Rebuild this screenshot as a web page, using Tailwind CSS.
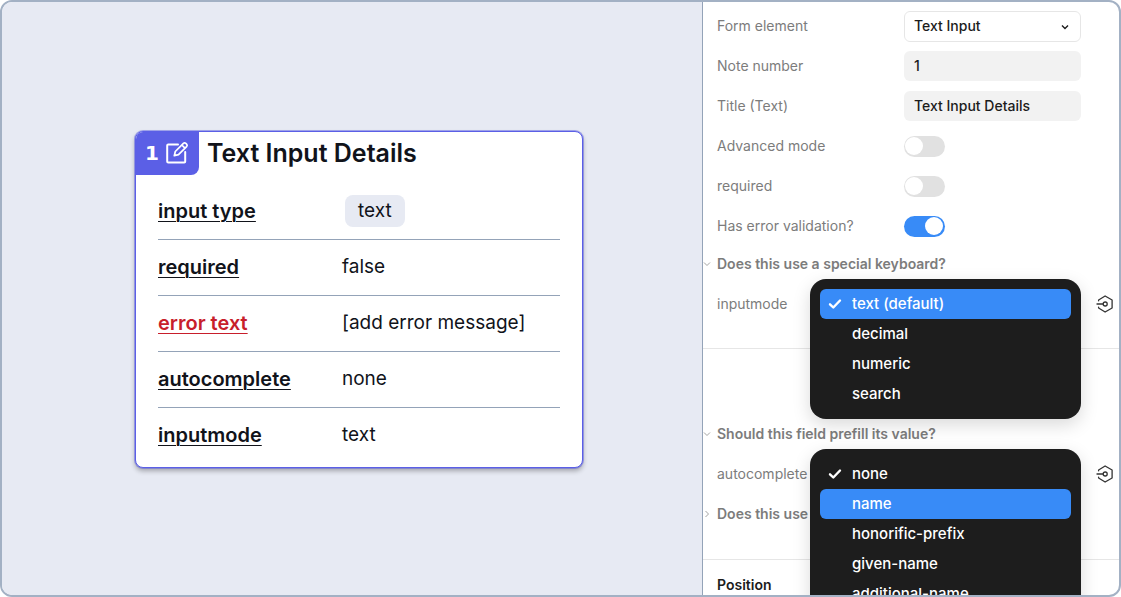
<!DOCTYPE html>
<html lang="en">
<head>
<meta charset="utf-8">
<meta name="viewport" content="width=device-width, initial-scale=1">
<title>Text Input Details</title>
<script src="https://cdn.jsdelivr.net/npm/@tailwindcss/browser@4"></script>
</head>
<body class="bg-white font-[Inter,sans-serif] text-sm text-[#1c1c1c]">
<div class="flex h-screen overflow-hidden rounded-xl border-2 border-[#a3b1c4] bg-white">
  <main class="flex min-w-0 flex-1 items-center justify-center bg-[#e7eaf3] pt-0.5 pl-3.5">
    <article class="w-[448px] overflow-hidden rounded-lg border border-[#5b5fe6] bg-white pb-1 text-xl text-[#11131a] shadow-[0_0_0_1px_rgba(91,95,230,0.5),0_3px_5px_rgba(0,0,0,0.3)]">
      <header class="flex items-start gap-2">
        <div class="-mt-px -ml-px flex h-11 w-16 items-center justify-center gap-1.5 rounded-br-lg bg-[#5b5fe6] text-white">
          <span class="font-['DejaVu_Sans',sans-serif] font-bold">1</span>
          <svg class="size-6" viewBox="0 0 24 24" fill="none" stroke="currentColor" stroke-width="2" stroke-linecap="round" stroke-linejoin="round" aria-hidden="true"><path d="M13 3.5H3.2a1 1 0 0 0-1 1v16a1 1 0 0 0 1 1h16a1 1 0 0 0 1-1V11"/><path stroke-width="1.7" d="m9.3 14.7 1-4.2 8.1-8.1a1.7 1.7 0 0 1 2.4 0l.8.8a1.7 1.7 0 0 1 0 2.4l-8.1 8.1ZM16.8 4l3.2 3.2"/></svg>
        </div>
        <h1 class="text-[25px] leading-[42px] font-semibold">Text Input Details</h1>
      </header>
      <div class="px-[22px] pt-2">
        <table class="w-full border-collapse">
          <tbody>
            <tr class="h-14 border-b border-[#94a3b8]"><th scope="row" class="w-[184px] text-left font-semibold"><a href="#type" class="underline decoration-1 underline-offset-3">input type</a></th><td class="text-[19px]"><span class="ml-[3px] inline-block rounded-lg bg-[#e7eaf3] px-[13px] leading-8">text</span></td></tr>
            <tr class="h-14 border-b border-[#94a3b8]"><th scope="row" class="text-left font-semibold"><a href="#required" class="underline decoration-1 underline-offset-3">required</a></th><td class="text-[19px]">false</td></tr>
            <tr class="h-14 border-b border-[#94a3b8]"><th scope="row" class="text-left font-semibold text-[#c81e2b]"><a href="#error" class="underline decoration-1 underline-offset-3">error text</a></th><td class="text-[19px]">[add error message]</td></tr>
            <tr class="h-14 border-b border-[#94a3b8]"><th scope="row" class="text-left font-semibold"><a href="#autocomplete" class="underline decoration-1 underline-offset-3">autocomplete</a></th><td class="text-[19px]">none</td></tr>
            <tr class="h-14"><th scope="row" class="text-left font-semibold"><a href="#inputmode" class="underline decoration-1 underline-offset-3">inputmode</a></th><td class="text-[19px]">text</td></tr>
          </tbody>
        </table>
      </div>
    </article>
  </main>

  <aside class="w-[417px] shrink-0 border-l border-[#94a3b8] pt-1 text-[#7c7c7c]">
    <form>
      <div class="flex h-10 items-center pl-3.5"><label for="element" class="w-[187px]">Form element</label>
        <div class="relative w-[177px]">
          <select id="element" class="h-[31px] w-full appearance-none rounded-md border border-[#e6e6e6] bg-white px-[9px] font-medium text-[#1c1c1c]"><option>Text Input</option></select>
          <svg class="pointer-events-none absolute top-3 right-3 size-2 text-[#1c1c1c]" viewBox="0 0 8 8" fill="none" stroke="currentColor" stroke-width="1.4" aria-hidden="true"><path d="m1 2.5 3 3 3-3"/></svg>
        </div>
      </div>
      <div class="flex h-10 items-center pl-3.5"><label for="number" class="w-[187px]">Note number</label><input id="number" value="1" class="h-[30px] w-[177px] rounded-md bg-[#f2f2f2] px-2.5 pb-0.5 font-medium text-[#1c1c1c]"></div>
      <div class="flex h-10 items-center pl-3.5"><label for="title" class="w-[187px]">Title (Text)</label><input id="title" value="Text Input Details" class="h-[30px] w-[177px] rounded-md bg-[#f2f2f2] px-2.5 pb-0.5 font-medium text-[#1c1c1c]"></div>
      <div class="flex h-10 items-center pl-3.5"><label for="advanced" class="w-[187px]">Advanced mode</label><input id="advanced" type="checkbox" role="switch" class="flex h-[21px] w-[41px] appearance-none items-center rounded-full bg-[#e1e1e1] p-px before:size-[18px] before:rounded-full before:bg-white checked:justify-end checked:bg-[#388bf7] checked:p-0.5"></div>
      <div class="flex h-10 items-center pl-3.5"><label for="req" class="w-[187px]">required</label><input id="req" type="checkbox" role="switch" class="flex h-[21px] w-[41px] appearance-none items-center rounded-full bg-[#e1e1e1] p-px before:size-[18px] before:rounded-full before:bg-white checked:justify-end checked:bg-[#388bf7] checked:p-0.5"></div>
      <div class="flex h-10 items-center pl-3.5"><label for="validation" class="w-[187px]">Has error validation?</label><input id="validation" type="checkbox" role="switch" checked class="flex h-[21px] w-[41px] appearance-none items-center rounded-full bg-[#e1e1e1] p-px before:size-[18px] before:rounded-full before:bg-white checked:justify-end checked:bg-[#388bf7] checked:p-0.5"></div>

      <section class="border-b border-[#e6e6e6] pb-[22px]">
        <h2><button type="button" aria-expanded="true" class="flex h-9 w-full items-center gap-1.5 font-semibold"><svg class="size-2" viewBox="0 0 8 8" fill="none" stroke="#a3a3a3" stroke-width="1" aria-hidden="true"><path d="m1 2.5 3 3 3-3"/></svg>Does this use a special keyboard?</button></h2>
        <div class="relative z-10 flex h-11 items-center justify-between pr-1 pl-3.5">
          <span id="mode-label">inputmode</span>
          <button type="button" aria-label="Apply variable"><svg class="size-5" viewBox="0 0 20 20" fill="none" stroke="#333" stroke-width="1.3" stroke-linecap="round" stroke-linejoin="round" aria-hidden="true"><path d="M3.6 6.8V6l6.5-4 7 4v8l-7 4-6.5-4v-.8M2 10h6"/><circle cx="10.2" cy="10" r="2"/></svg></button>
          <ul role="listbox" aria-labelledby="mode-label" class="absolute top-[-3px] right-[38px] w-[271px] rounded-2xl bg-[#1d1d1d] p-2.5 text-[15px] font-medium text-white shadow-[0_6px_18px_rgba(0,0,0,0.15)]">
            <li><button type="button" role="option" aria-selected="true" class="flex h-[30px] w-full items-center gap-2.5 rounded-md bg-[#388bf7] px-2"><svg class="size-3.5" viewBox="0 0 14 14" fill="none" stroke="currentColor" stroke-width="2.4" stroke-linecap="round" stroke-linejoin="round" aria-hidden="true"><path d="m2 7.3 3.3 3.2L12 3.5"/></svg>text (default)</button></li>
            <li><button type="button" role="option" class="flex h-[30px] w-full items-center pl-8">decimal</button></li>
            <li><button type="button" role="option" class="flex h-[30px] w-full items-center pl-8">numeric</button></li>
            <li><button type="button" role="option" class="flex h-[30px] w-full items-center pl-8">search</button></li>
          </ul>
        </div>
      </section>

      <section class="border-b border-[#e6e6e6] pt-[65px] pb-[25px]">
        <h2><button type="button" aria-expanded="true" class="flex h-10 w-full items-center gap-1.5 font-semibold"><svg class="size-2" viewBox="0 0 8 8" fill="none" stroke="#a3a3a3" stroke-width="1" aria-hidden="true"><path d="m1 2.5 3 3 3-3"/></svg>Should this field prefill its value?</button></h2>
        <div class="relative z-20 flex h-10 items-center justify-between pr-1 pl-3.5">
          <span id="auto-label">autocomplete</span>
          <button type="button" aria-label="Apply variable"><svg class="size-5" viewBox="0 0 20 20" fill="none" stroke="#333" stroke-width="1.3" stroke-linecap="round" stroke-linejoin="round" aria-hidden="true"><path d="M3.6 6.8V6l6.5-4 7 4v8l-7 4-6.5-4v-.8M2 10h6"/><circle cx="10.2" cy="10" r="2"/></svg></button>
          <ul role="listbox" aria-labelledby="auto-label" class="absolute top-[-5px] right-[38px] w-[271px] rounded-2xl bg-[#1d1d1d] p-2.5 text-[15px] font-medium text-white shadow-[0_6px_18px_rgba(0,0,0,0.15)]">
            <li><button type="button" role="option" aria-selected="true" class="flex h-[30px] w-full items-center gap-2.5 px-2"><svg class="size-3.5" viewBox="0 0 14 14" fill="none" stroke="currentColor" stroke-width="2.4" stroke-linecap="round" stroke-linejoin="round" aria-hidden="true"><path d="m2 7.3 3.3 3.2L12 3.5"/></svg>none</button></li>
            <li><button type="button" role="option" class="flex h-[30px] w-full items-center rounded-md bg-[#388bf7] pl-8">name</button></li>
            <li><button type="button" role="option" class="flex h-[30px] w-full items-center pl-8">honorific-prefix</button></li>
            <li><button type="button" role="option" class="flex h-[30px] w-full items-center pl-8">given-name</button></li>
            <li><button type="button" role="option" class="flex h-[30px] w-full items-center pl-8">additional-name</button></li>
          </ul>
        </div>
        <h2><button type="button" aria-expanded="false" class="flex h-10 w-full items-center gap-1.5 font-semibold"><svg class="size-2" viewBox="0 0 8 8" fill="none" stroke="#a3a3a3" stroke-width="1" aria-hidden="true"><path d="m2.5 1 3 3-3 3"/></svg>Does this use</button></h2>
      </section>
      <h2 class="pt-[15px] pl-3.5 font-semibold text-[#1c1c1c]">Position</h2>
    </form>
  </aside>
</div>
</body>
</html>
